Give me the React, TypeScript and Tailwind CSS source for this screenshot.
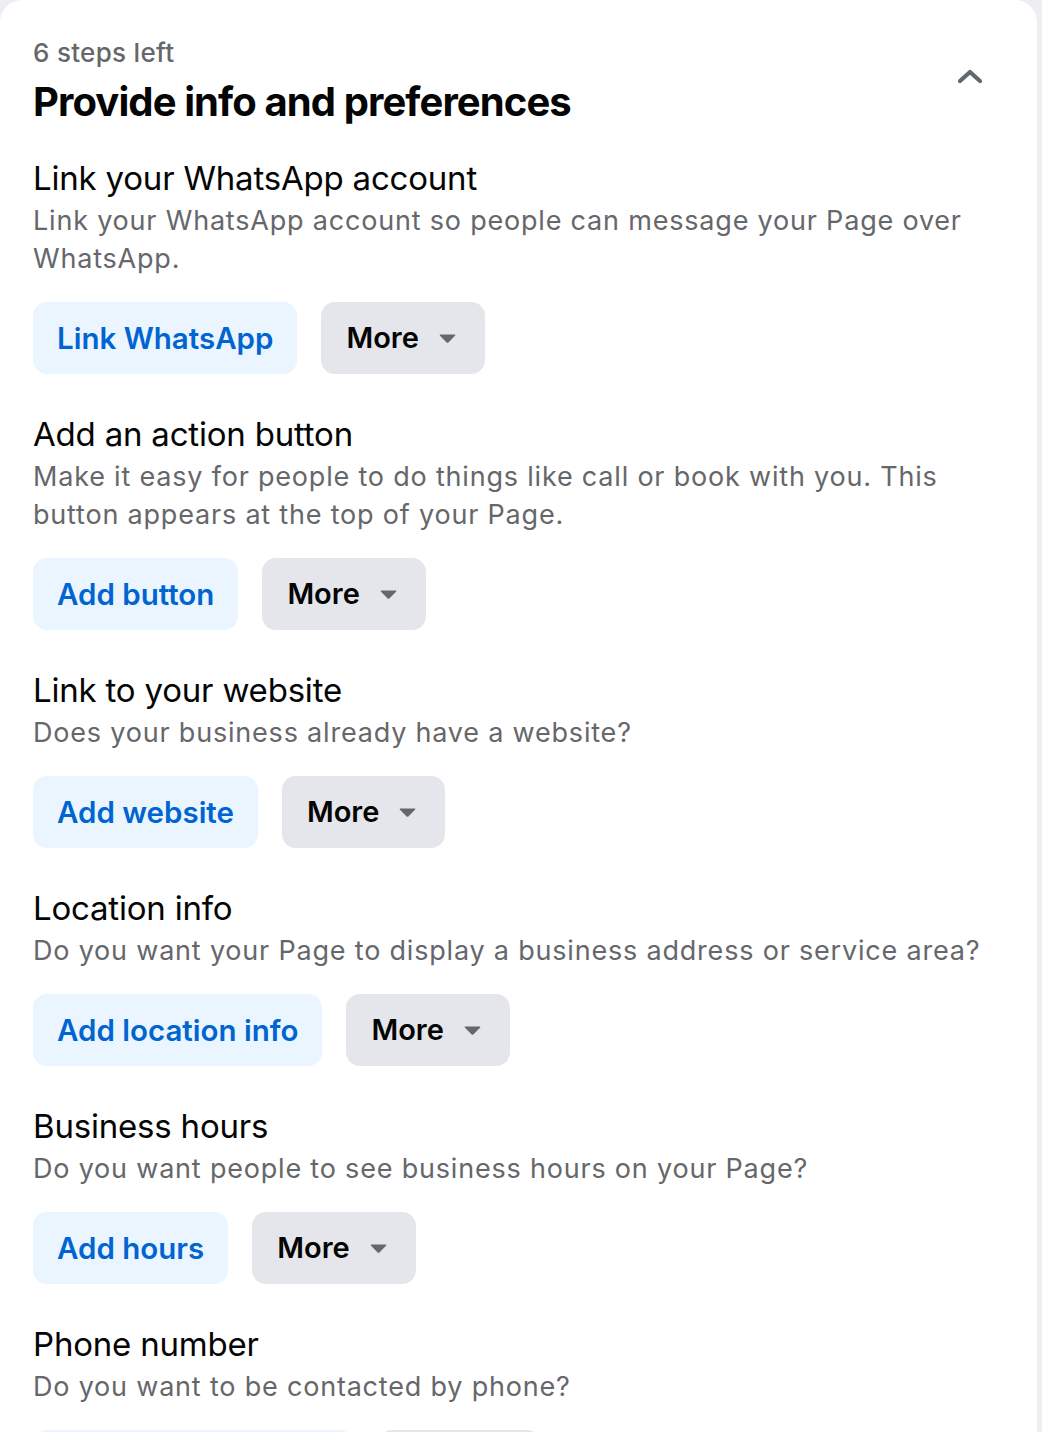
import React from "react";

const sections = [
  {
    title: "Link your WhatsApp account",
    desc: "Link your WhatsApp account so people can message your Page over WhatsApp.",
    action: "Link WhatsApp",
  },
  {
    title: "Add an action button",
    desc: "Make it easy for people to do things like call or book with you. This button appears at the top of your Page.",
    action: "Add button",
  },
  {
    title: "Link to your website",
    desc: "Does your business already have a website?",
    action: "Add website",
  },
  {
    title: "Location info",
    desc: "Do you want your Page to display a business address or service area?",
    action: "Add location info",
  },
  {
    title: "Business hours",
    desc: "Do you want people to see business hours on your Page?",
    action: "Add hours",
  },
  {
    title: "Phone number",
    desc: "Do you want to be contacted by phone?",
    action: "Add phone number",
  },
];

function Caret() {
  return (
    <svg width="19" height="11" viewBox="0 0 19 11" className="ml-[19px]">
      <path d="M2.5 1.5 H16.5 Q18 1.5 17 2.7 L10.6 9.2 Q9.5 10.3 8.4 9.2 L2 2.7 Q1 1.5 2.5 1.5 Z" fill="#65676b" />
    </svg>
  );
}

export default function App() {
  return (
    <div
      className="w-[1042px] h-[1432px] overflow-hidden bg-[#eceef1]"
      style={{ fontFamily: "Inter, 'Noto Sans', sans-serif" }}
    >
      <div className="w-[1037px] min-h-[1432px] bg-white rounded-t-[22px] pl-[33px] pr-[40px] pt-[38px]">
        <div className="flex justify-between">
          <div>
            <div className="text-[26px] leading-[30px] font-medium text-[#65676b] tracking-[0.3px]">6 steps left</div>
            <div className="mt-[10px] text-[40px] leading-[48px] font-bold text-[#050505] tracking-[-0.9px]">
              Provide info and preferences
            </div>
          </div>
          <div className="pt-[28px] pr-[13px]">
            <svg width="28" height="20" viewBox="0 0 28 20">
              <path d="M4 15 L14 6 L24 15" stroke="#606770" strokeWidth="4.2" fill="none" strokeLinecap="round" strokeLinejoin="round" />
            </svg>
          </div>
        </div>
        <div className="mt-[32px] flex flex-col gap-[40px]">
          {sections.map((s) => (
            <div key={s.title}>
              <div className="text-[33px] leading-[40px] text-[#050505] tracking-[-0.2px]">{s.title}</div>
              <div className="mt-[4px] text-[27px] leading-[38px] text-[#65676b] tracking-[0.8px]">{s.desc}</div>
              <div className="mt-[24px] flex gap-[24px]">
                <button className="h-[72px] px-[24px] rounded-[14px] bg-[#ebf5ff] text-[#0064d1] text-[29.5px] font-semibold">
                  {s.action}
                </button>
                <button className="h-[72px] pl-[25px] pr-[28px] rounded-[14px] bg-[#e4e6eb] text-[#050505] text-[29px] font-semibold flex items-center">
                  More
                  <Caret />
                </button>
              </div>
            </div>
          ))}
        </div>
      </div>
    </div>
  );
}
